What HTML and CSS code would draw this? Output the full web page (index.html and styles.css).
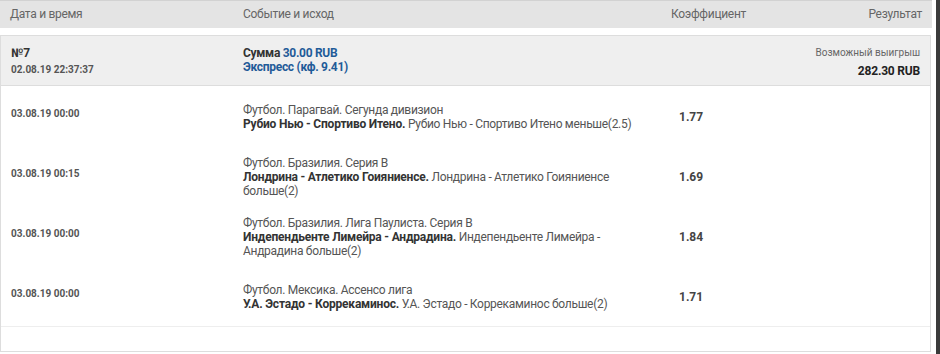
FILE: index.html
```html
<!DOCTYPE html>
<html lang="ru">
<head>
<meta charset="utf-8">
<title>Ставка №7</title>
<link rel="stylesheet" href="styles.css">
</head>
<body>
<div class="screen">
  <div class="content">
    <div class="thead">
      <div class="c-date">Дата и время</div>
      <div class="c-event">Событие и исход</div>
      <div class="c-coef">Коэффициент</div>
      <div class="c-res">Результат</div>
    </div>
    <div class="card">
      <div class="summary">
        <div class="c-date">
          <div class="num">№7</div>
          <div class="stamp">02.08.19 22:37:37</div>
        </div>
        <div class="c-event">
          <div class="sum">Сумма <span class="blue">30.00 RUB</span></div>
          <div class="blue">Экспресс (кф. 9.41)</div>
        </div>
        <div class="c-coef"></div>
        <div class="c-res">
          <div class="win-label">Возможный выигрыш</div>
          <div class="win">282.30 RUB</div>
        </div>
      </div>
      <div class="row">
        <div class="c-date date">03.08.19 00:00</div>
        <div class="c-event event">
          <div>Футбол. Парагвай. Сегунда дивизион</div>
          <div><b>Рубио Нью - Спортиво Итено.</b> Рубио Нью - Спортиво Итено меньше(2.5)</div>
        </div>
        <div class="c-coef coef">1.77</div>
        <div class="c-res"></div>
      </div>
      <div class="row">
        <div class="c-date date">03.08.19 00:15</div>
        <div class="c-event event">
          <div>Футбол. Бразилия. Серия B</div>
          <div><b>Лондрина - Атлетико Гоияниенсе.</b> Лондрина - Атлетико Гоияниенсе больше(2)</div>
        </div>
        <div class="c-coef coef">1.69</div>
        <div class="c-res"></div>
      </div>
      <div class="row">
        <div class="c-date date">03.08.19 00:00</div>
        <div class="c-event event">
          <div>Футбол. Бразилия. Лига Паулиста. Серия B</div>
          <div><b>Индепендьенте Лимейра - Андрадина.</b> Индепендьенте Лимейра - Андрадина больше(2)</div>
        </div>
        <div class="c-coef coef">1.84</div>
        <div class="c-res"></div>
      </div>
      <div class="row">
        <div class="c-date date">03.08.19 00:00</div>
        <div class="c-event event">
          <div>Футбол. Мексика. Ассенсо лига</div>
          <div><b>У.А. Эстадо - Коррекаминос.</b> У.А. Эстадо - Коррекаминос больше(2)</div>
        </div>
        <div class="c-coef coef">1.71</div>
        <div class="c-res"></div>
      </div>
      <div class="foot"></div>
    </div>
  </div>
  <div class="scrollbar"></div>
</div>
</body>
</html>
```

FILE: styles.css
```css
html, body {
  margin: 0;
  padding: 0;
  background: #ffffff;
}

body {
  font-family: Roboto, "Liberation Sans", Arial, sans-serif;
  font-size: 12px;
  color: #333333;
}

.screen {
  display: flex;
  width: 940px;
  height: 354px;
  overflow: hidden;
}

.content {
  width: 932px;
}

.scrollbar {
  width: 4px;
  margin-left: 4px;
  background: #3b3b3b;
}

.thead,
.summary,
.row {
  display: flex;
}

.c-date {
  width: 233px;
  padding-left: 10px;
}

.c-event {
  width: 428px;
}

.c-coef {
  width: 110px;
}

.c-res {
  flex: 1;
  text-align: right;
  padding-right: 10px;
}

.thead {
  height: 27px;
  border-top: 1px solid #d2d2d2;
  background: #e4e4e4;
  color: #666666;
  font-size: 12px;
  line-height: 27px;
  letter-spacing: -0.3px;
}

.card {
  margin-top: 7px;
  width: 929px;
  border: 1px solid #dddddd;
}

.summary {
  box-sizing: border-box;
  height: 50px;
  background: #efefef;
  border-bottom: 1px solid #dddddd;
}

.summary .c-date {
  width: 232px;
  padding-top: 9px;
}

.num {
  font-weight: 700;
  font-size: 12px;
  line-height: 16px;
  color: #333333;
}

.stamp {
  margin-top: 2px;
  font-weight: 700;
  font-size: 10px;
  line-height: 14px;
  color: #555555;
}

.summary .c-event {
  padding-top: 10px;
  font-weight: 700;
  line-height: 14px;
  letter-spacing: -0.3px;
}

.sum {
  color: #333333;
}

.blue {
  color: #1f5b98;
}

.summary .c-res {
  padding-top: 10px;
}

.win-label {
  font-size: 10px;
  line-height: 14px;
  color: #666666;
}

.win {
  margin-top: 4px;
  font-weight: 700;
  font-size: 12px;
  line-height: 14px;
  color: #222222;
  letter-spacing: -0.2px;
}

.row {
  box-sizing: border-box;
  height: 60px;
  padding-top: 2px;
  align-items: center;
}

.row .c-date {
  width: 232px;
}

.date {
  font-weight: 700;
  font-size: 10px;
  line-height: 14px;
  color: #555555;
  padding-bottom: 6px;
}

.event {
  line-height: 14px;
  color: #555555;
  padding-right: 14px;
  box-sizing: border-box;
  letter-spacing: -0.3px;
}

.event b {
  color: #333333;
  letter-spacing: -0.2px;
}

.coef {
  padding-left: 8px;
  box-sizing: border-box;
  font-weight: 700;
  color: #444444;
}

.foot {
  height: 24px;
  border-top: 1px solid #eeeeee;
}
```
